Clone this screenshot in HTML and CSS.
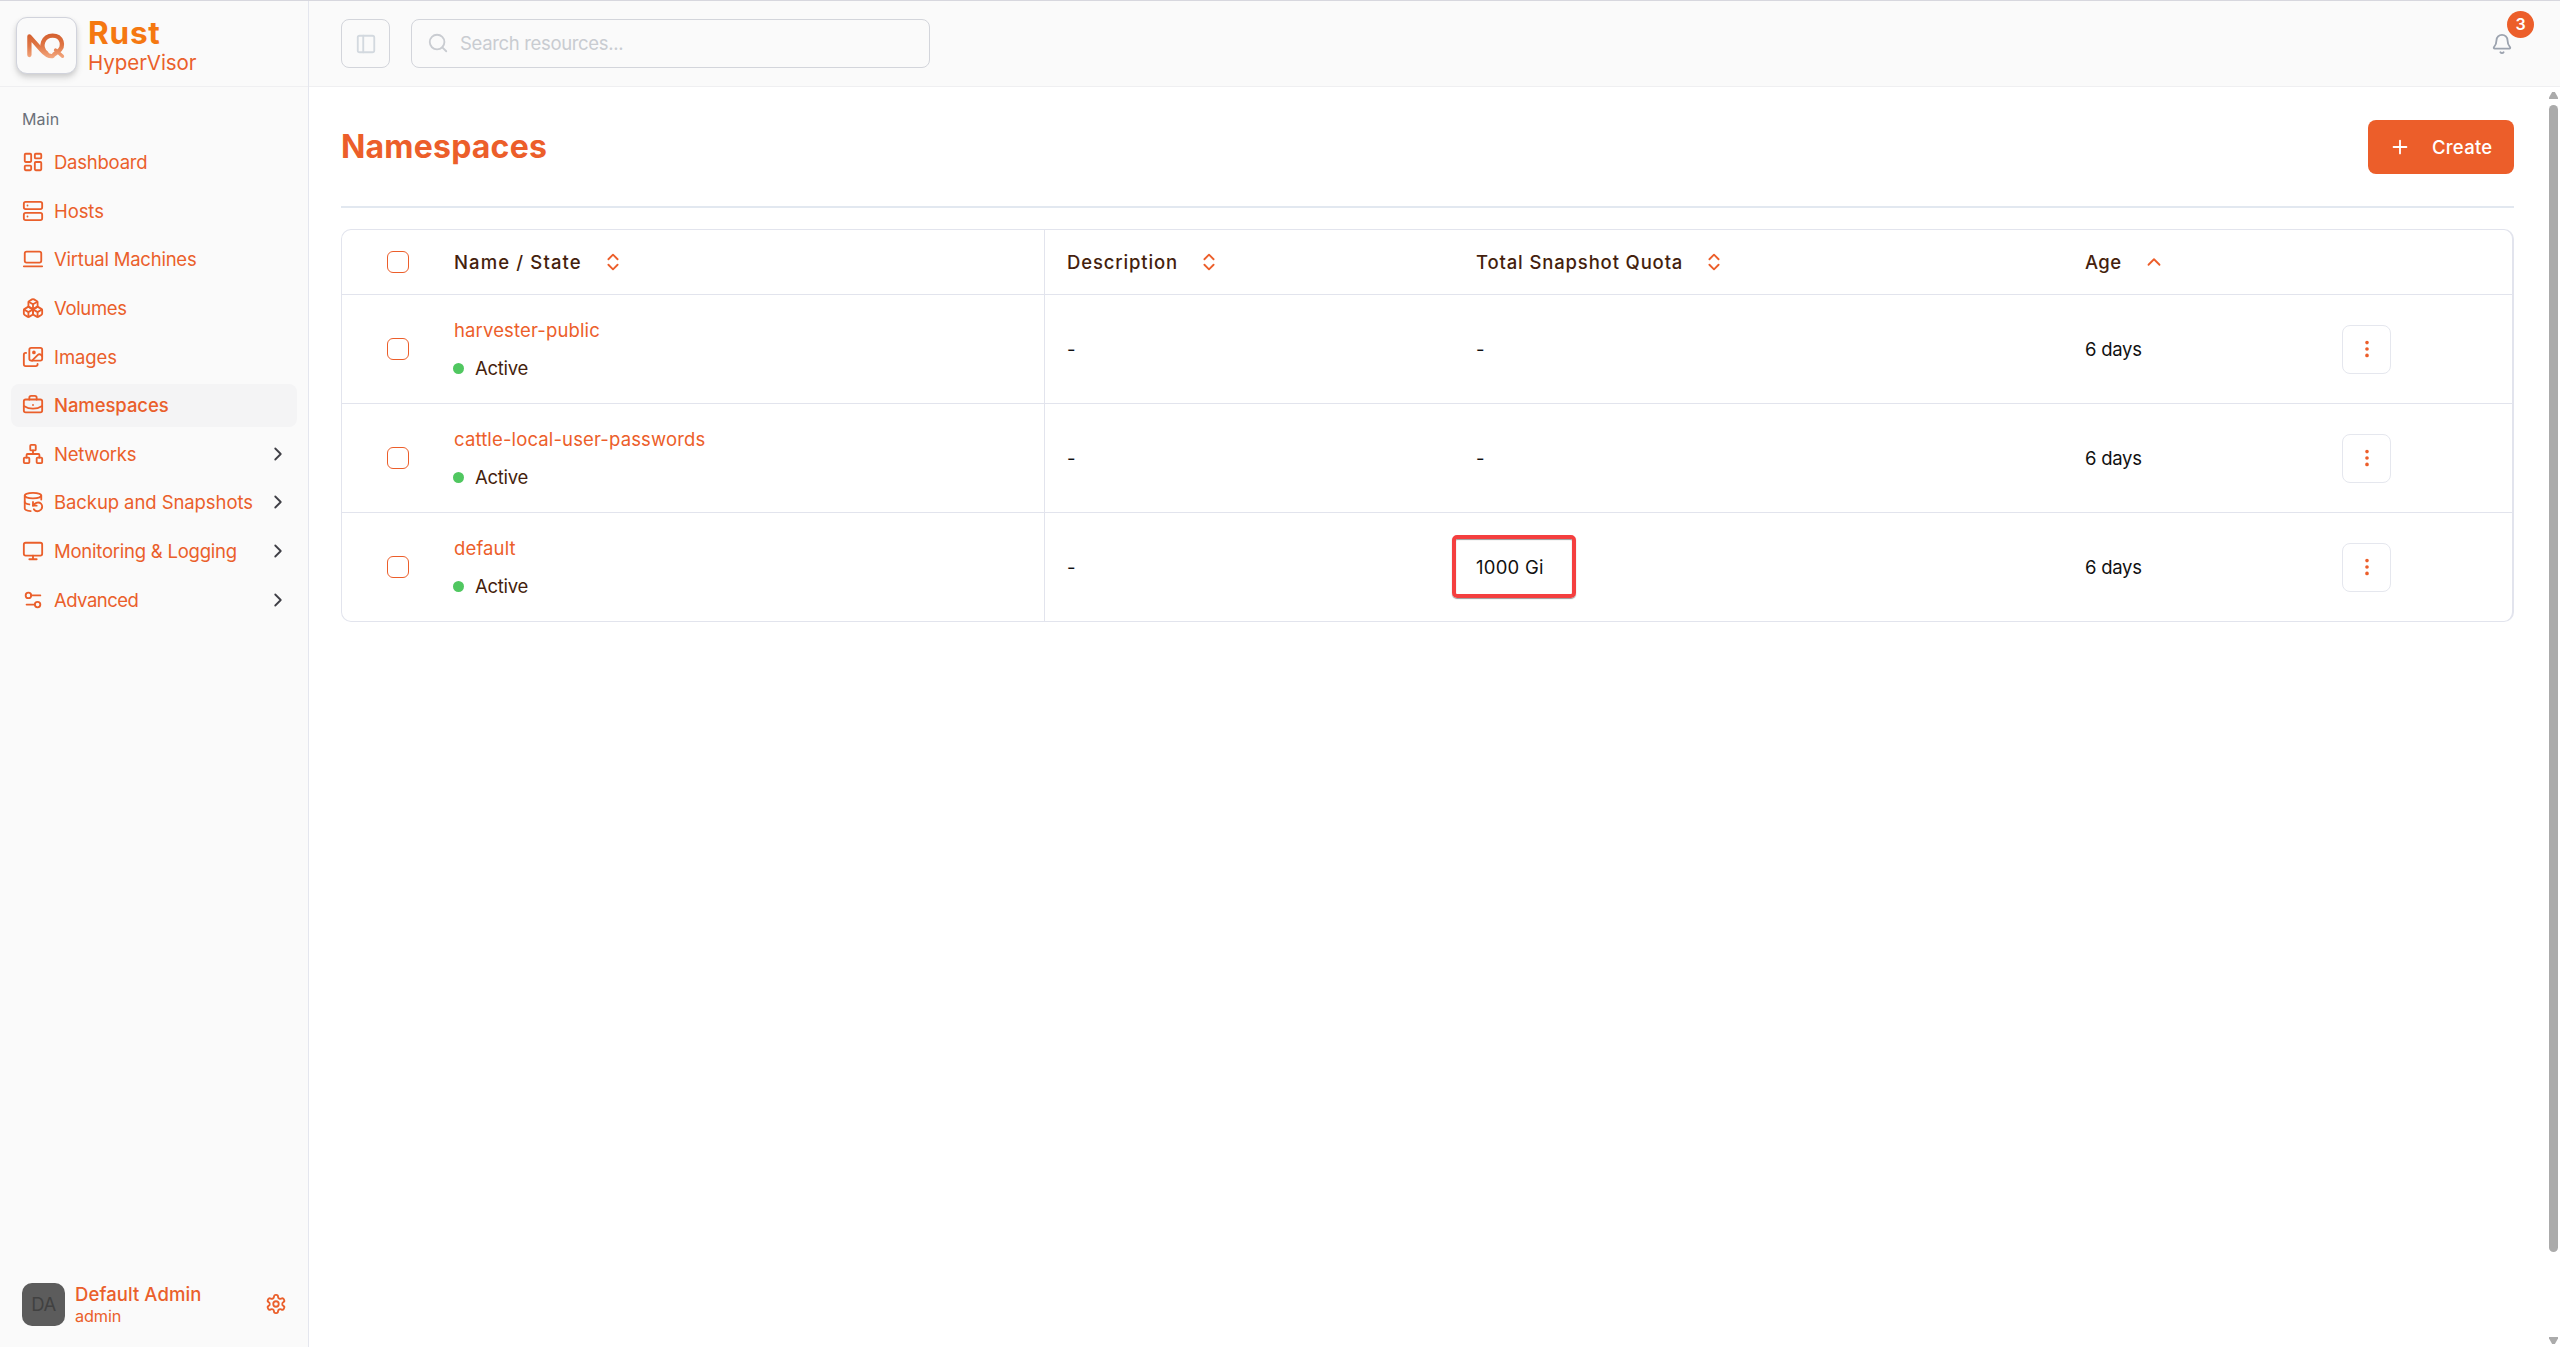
FILE: index.html
```html
<!DOCTYPE html>
<html lang="en">
<head>
<meta charset="utf-8">
<title>Namespaces - Rust HyperVisor</title>
<link rel="stylesheet" href="styles.css">
</head>
<body>
<svg class="defs" width="0" height="0">
  <symbol id="sort" viewBox="0 0 24 24"><path d="m7 15 5 5 5-5M7 9l5-5 5 5"/></symbol>
  <symbol id="chev" viewBox="0 0 24 24"><path d="m9 18 6-6-6-6"/></symbol>
  <symbol id="dots" viewBox="0 0 24 24"><circle cx="12" cy="12" r="1"/><circle cx="12" cy="5" r="1"/><circle cx="12" cy="19" r="1"/></symbol>
</svg>
<div class="app">
  <aside class="sidebar">
    <div class="brand">
      <div class="logo">
        <svg width="40" height="28" viewBox="0 0 40 28">
          <defs><linearGradient id="nq" gradientUnits="userSpaceOnUse" x1="0" y1="2" x2="0" y2="26"><stop offset="0" stop-color="#d4602f"/><stop offset=".5" stop-color="#e07746"/><stop offset="1" stop-color="#f3a880"/></linearGradient></defs>
          <path d="M3.400 23V4.400L15 17.500c4 4.600 7 7.200 11.500 6.600"/>
          <path d="M20.500 21.300C12.500 15 17.500 3.600 26.600 3.600c9.300 0 12.600 10.500 5.400 16L28 22.500"/>
          <path class="tail" d="m29.500 18 7 6.300"/>
        </svg>
      </div>
      <div class="brand-text"><div class="brand-name">Rust</div><div class="brand-sub">HyperVisor</div></div>
    </div>
    <nav class="nav">
      <div class="nav-label">Main</div>
      <a class="item snug"><svg class="icon" viewBox="0 0 24 24"><rect width="7" height="9" x="3" y="3" rx="1"/><rect width="7" height="5" x="14" y="3" rx="1"/><rect width="7" height="9" x="14" y="12" rx="1"/><rect width="7" height="5" x="3" y="16" rx="1"/></svg><span>Dashboard</span></a>
      <a class="item"><svg class="icon" viewBox="0 0 24 24"><rect width="20" height="8" x="2" y="2" rx="2"/><rect width="20" height="8" x="2" y="14" rx="2"/><path d="M6 6h.01M6 18h.01"/></svg><span>Hosts</span></a>
      <a class="item snug"><svg class="icon" viewBox="0 0 24 24"><rect width="18" height="12" x="3" y="4" rx="2"/><path d="M2 20h20"/></svg><span>Virtual Machines</span></a>
      <a class="item tight"><svg class="icon" viewBox="0 0 24 24"><path d="M2.970 12.920A2 2 0 0 0 2 14.630v3.240a2 2 0 0 0 .97 1.710l3 1.800a2 2 0 0 0 2.060 0L12 19v-5.500l-5-3-4.030 2.420Z"/><path d="m7 16.500-4.740-2.850M7 16.500l5-3M7 16.500v5.170"/><path d="M12 13.500V19l3.970 2.380a2 2 0 0 0 2.060 0l3-1.800a2 2 0 0 0 .97-1.710v-3.240a2 2 0 0 0-.97-1.710L17 10.500l-5 3Z"/><path d="m17 16.500-5-3M17 16.500l4.740-2.850M17 16.500v5.170"/><path d="M7.970 4.420A2 2 0 0 0 7 6.130v4.370l5 3 5-3V6.130a2 2 0 0 0-.97-1.710l-3-1.800a2 2 0 0 0-2.060 0l-3 1.800Z"/><path d="M12 8 7.260 5.150M12 8l4.740-2.850M12 13.500V8"/></svg><span>Volumes</span></a>
      <a class="item"><svg class="icon" viewBox="0 0 24 24"><path d="M4.500 7.500H4a2 2 0 0 0-2 2V20a2 2 0 0 0 2 2h11a2 2 0 0 0 2-2v-.5"/><path d="m22 11-1.296-1.296a2.400 2.400 0 0 0-3.408 0L11 16"/><circle cx="13" cy="7" r="1"/><rect x="8" y="2" width="14" height="14" rx="2"/></svg><span>Images</span></a>
      <a class="item active"><svg class="icon" viewBox="0 0 24 24"><path d="M12 12h.01"/><path d="M16 6V4a2 2 0 0 0-2-2h-4a2 2 0 0 0-2 2v2"/><path d="M22 13a18.150 18.150 0 0 1-20 0"/><rect width="20" height="14" x="2" y="6" rx="2"/></svg><span>Namespaces</span></a>
      <a class="item snug"><svg class="icon" viewBox="0 0 24 24"><rect x="16" y="16" width="6" height="6" rx="1"/><rect x="2" y="16" width="6" height="6" rx="1"/><rect x="9" y="2" width="6" height="6" rx="1"/><path d="M5 16v-3a1 1 0 0 1 1-1h12a1 1 0 0 1 1 1v3M12 12V8"/></svg><span>Networks</span><svg class="chev"><use href="#chev"/></svg></a>
      <a class="item"><svg class="icon" viewBox="0 0 24 24"><ellipse cx="12" cy="5" rx="9" ry="3"/><path d="M3 12a9 3 0 0 0 5 2.690M21 9.300V5"/><path d="M3 5v14a9 3 0 0 0 6.470 2.880M12 12v4h4"/><path d="M13 20a5 5 0 0 0 9-3 4.500 4.500 0 0 0-4.500-4.500c-1.330 0-2.540.54-3.410 1.410L12 16"/></svg><span>Backup and Snapshots</span><svg class="chev"><use href="#chev"/></svg></a>
      <a class="item snug"><svg class="icon" viewBox="0 0 24 24"><rect width="20" height="14" x="2" y="3" rx="2"/><path d="M8 21h8M12 17v4"/></svg><span>Monitoring &amp; Logging</span><svg class="chev"><use href="#chev"/></svg></a>
      <a class="item tighter"><svg class="icon" viewBox="0 0 24 24"><path d="M20 7h-10M14 17H5"/><circle cx="17" cy="17" r="3"/><circle cx="7" cy="7" r="3"/></svg><span>Advanced</span><svg class="chev"><use href="#chev"/></svg></a>
    </nav>
    <div class="user">
      <div class="avatar">DA</div>
      <div class="user-text"><div class="user-name">Default Admin</div><div class="user-role">admin</div></div>
      <svg class="gear" viewBox="0 0 24 24"><path d="M12.220 2h-.44a2 2 0 0 0-2 2v.18a2 2 0 0 1-1 1.730l-.43.25a2 2 0 0 1-2 0l-.15-.08a2 2 0 0 0-2.730.73l-.22.38a2 2 0 0 0 .73 2.730l.15.1a2 2 0 0 1 1 1.720v.51a2 2 0 0 1-1 1.740l-.15.09a2 2 0 0 0-.73 2.730l.22.38a2 2 0 0 0 2.730.73l.15-.08a2 2 0 0 1 2 0l.43.25a2 2 0 0 1 1 1.730V20a2 2 0 0 0 2 2h.44a2 2 0 0 0 2-2v-.18a2 2 0 0 1 1-1.730l.43-.25a2 2 0 0 1 2 0l.15.08a2 2 0 0 0 2.730-.73l.22-.39a2 2 0 0 0-.73-2.730l-.15-.08a2 2 0 0 1-1-1.740v-.5a2 2 0 0 1 1-1.740l.15-.09a2 2 0 0 0 .73-2.730l-.22-.38a2 2 0 0 0-2.730-.73l-.15.08a2 2 0 0 1-2 0l-.43-.25a2 2 0 0 1-1-1.730V4a2 2 0 0 0-2-2z"/><circle cx="12" cy="12" r="3"/></svg>
    </div>
  </aside>
  <div class="content">
    <header class="topbar">
      <div class="toggle"><svg viewBox="0 0 24 24"><rect width="18" height="18" x="3" y="3" rx="2"/><path d="M9 3v18"/></svg></div>
      <div class="search"><svg viewBox="0 0 24 24"><circle cx="11" cy="11" r="8"/><path d="m21 21-4.300-4.300"/></svg><span>Search resources...</span></div>
      <div class="bell"><svg viewBox="0 0 24 24"><path d="M10.268 21a2 2 0 0 0 3.464 0"/><path d="M3.262 15.326A1 1 0 0 0 4 17h16a1 1 0 0 0 .74-1.673C19.410 13.956 18 12.499 18 8A6 6 0 0 0 6 8c0 4.499-1.411 5.956-2.738 7.326"/></svg><span class="badge">3</span></div>
    </header>
    <div class="body">
      <main class="main">
        <div class="page-head"><h1>Namespaces</h1><button class="create"><svg viewBox="0 0 24 24"><path d="M5 12h14M12 5v14"/></svg>Create</button></div>
        <div class="table">
          <div class="row head">
            <div class="cell check"><i class="box"></i></div>
            <div class="cell name th wide">Name / State<svg class="sort"><use href="#sort"/></svg></div>
            <div class="cell th">Description<svg class="sort"><use href="#sort"/></svg></div>
            <div class="cell th">Total Snapshot Quota<svg class="sort"><use href="#sort"/></svg></div>
            <div class="cell th age">Age<svg class="up" viewBox="0 0 24 24"><path d="m18 15-6-6-6 6"/></svg></div>
            <div class="cell"></div>
          </div>
          <div class="row">
            <div class="cell check"><i class="box"></i></div>
            <div class="cell name"><div><div class="link">harvester-public</div><div class="state"><i class="dot"></i>Active</div></div></div>
            <div class="cell">-</div><div class="cell">-</div><div class="cell days">6 days</div>
            <div class="cell"><div class="more"><svg><use href="#dots"/></svg></div></div>
          </div>
          <div class="row">
            <div class="cell check"><i class="box"></i></div>
            <div class="cell name"><div><div class="link">cattle-local-user-passwords</div><div class="state"><i class="dot"></i>Active</div></div></div>
            <div class="cell">-</div><div class="cell">-</div><div class="cell days">6 days</div>
            <div class="cell"><div class="more"><svg><use href="#dots"/></svg></div></div>
          </div>
          <div class="row">
            <div class="cell check"><i class="box"></i></div>
            <div class="cell name"><div><div class="link">default</div><div class="state"><i class="dot"></i>Active</div></div></div>
            <div class="cell">-</div><div class="cell quota">1000 Gi<i class="highlight"></i></div><div class="cell days">6 days</div>
            <div class="cell"><div class="more"><svg><use href="#dots"/></svg></div></div>
          </div>
        </div>
      </main>
      <div class="scrollbar"><i class="arrow-up"></i><i class="thumb"></i><i class="arrow-down"></i></div>
    </div>
  </div>
</div>
</body>
</html>
```
FILE: styles.css
```css
* { box-sizing: border-box; }
body { margin: 0; font: 400 18.5px/24px Inter, sans-serif; color: #111; background: #fff; overflow: hidden; }
svg { width: 22px; height: 22px; fill: none; stroke: currentColor; stroke-width: 2; stroke-linecap: round; stroke-linejoin: round; flex: none; }
.defs { position: absolute; width: 0; height: 0; }
.app { display: flex; height: 1347px; border-top: 1px solid #d7d7de; }

.sidebar { width: 309px; flex: none; display: flex; flex-direction: column; background: #fafafa; border-right: 1px solid #e4e6ee; color: #ea5f2b; }
.brand { height: 86px; flex: none; display: flex; align-items: flex-start; padding: 16px 0 0 16px; gap: 11px; border-bottom: 1px solid #efeff1; }
.logo { width: 61px; height: 57px; display: grid; place-items: center; border: 1px solid #d1d3dc; border-radius: 11px; background: #fafafa; box-shadow: 0 4px 7px rgba(0,0,0,.12), 0 2px 4px rgba(0,0,0,.08); }
.logo svg { width: 40px; height: 28px; margin-right: 1px; stroke: url(#nq); stroke-width: 4.3; }
.logo .tail { stroke-width: 3.3; }
.brand-name { font-size: 31.5px; font-weight: 700; line-height: 34px; letter-spacing: .8px; color: #f57811; margin-top: -1px; }
.brand-sub { font-size: 20.5px; line-height: 26px; letter-spacing: -.05px; }

.nav { flex: 1; padding: 16px 11px; }
.nav-label { height: 32px; line-height: 33px; padding-left: 11px; font-size: 16px; letter-spacing: .15px; color: #6b7079; }
.item { height: 43px; margin-bottom: 5.640px; padding: 0 8px 0 11px; display: flex; align-items: center; gap: 10px; border-radius: 8px; letter-spacing: -.08px; white-space: nowrap; }
.nav-label + .item { margin-top: 5.500px; }
.item.snug { letter-spacing: -.23px; }
.item.tight { letter-spacing: -.35px; }
.item.tighter { letter-spacing: -.53px; }
.item.active { background: #f4f4f5; font-weight: 500; }
.chev { color: #3f3f46; margin-left: auto; }

.user { display: flex; align-items: center; height: 86px; padding: 0 21px 0 22px; }
.avatar { width: 43px; height: 43px; border-radius: 10px; background: #5c5c5c; color: #414141; display: grid; place-items: center; letter-spacing: -.5px; }
.user-text { margin-left: 10px; }
.user-name { font-weight: 500; letter-spacing: .08px; line-height: 24px; }
.user-role { font-size: 16.300px; letter-spacing: -.15px; line-height: 21px; }
.gear { margin-left: auto; }

.content { flex: 1; display: flex; flex-direction: column; min-width: 0; }
.topbar { height: 86px; flex: none; display: flex; align-items: center; padding: 0 47px 0 32px; gap: 21px; background: #fafafa; border-bottom: 1px solid #efeff1; }
.toggle { width: 49px; height: 49px; display: grid; place-items: center; border: 1px solid #d3d5db; border-radius: 8px; color: #d3d9df; }
.search { width: 519px; height: 49px; display: flex; align-items: center; gap: 11px; padding: 0 0 1px 15px; border: 1px solid #d3d5db; border-radius: 8px; color: #c9ccd1; letter-spacing: -.34px; }
.bell { margin-left: auto; position: relative; width: 22px; height: 22px; color: #9ca3af; }
.bell svg { display: block; }
.badge { position: absolute; left: 16px; top: -22px; width: 27px; height: 27px; border-radius: 50%; background: #ec5e2a; color: #fff; font-size: 16px; font-weight: 600; line-height: 27px; text-align: center; }

.body { flex: 1; display: flex; }
.main { flex: 1; padding: 33px 35px 0 32px; }
.page-head { display: flex; justify-content: space-between; align-items: flex-start; height: 88px; border-bottom: 2px solid #e2e8f0; }
h1 { margin: 0; font-size: 32px; line-height: 54px; font-weight: 700; letter-spacing: .2px; color: #ec5e2a; }
.create { width: 146px; height: 54px; display: flex; align-items: center; gap: 21px; border: 0; border-radius: 8px; padding: 0 0 1px 21px; background: #ec5e2a; color: #fff; font: 500 18.500px Inter, sans-serif; letter-spacing: .25px; }

.table { margin-top: 21px; border: 1px solid #e2e4ed; border-right-width: 2px; border-radius: 10px; }
.row { display: grid; grid-template-columns: 90px 613px 409px 609px 257px 1fr; height: 109px; border-bottom: 1px solid #e2e4ed; }
.row.head { height: 65px; }
.row:last-child { border-bottom: 0; height: 108px; }
.cell { display: flex; align-items: center; padding-left: 22px; }
.check { padding-left: 45px; }
.name { border-right: 1px solid #e2e4ed; }
.box { width: 22px; height: 22px; border: 1px solid #ec5e2a; border-radius: 6px; }
.th { font-weight: 500; letter-spacing: .85px; color: #451f0e; }
.th.wide { letter-spacing: 1.12px; }
.th.age { letter-spacing: .4px; }
.sort { margin-left: 20px; color: #ec5e2a; }
.up { margin-left: 21px; color: #ec5e2a; }
.link { color: #ec5e2a; letter-spacing: .14px; line-height: 24px; margin-bottom: 14px; }
.state { display: flex; align-items: center; gap: 11px; margin-left: -1px; color: #451f0e; letter-spacing: -.3px; }
.dot { width: 11px; height: 11px; border-radius: 50%; background: #50c760; }
.days { letter-spacing: -.25px; }
.quota { position: relative; letter-spacing: .25px; }
.highlight { position: absolute; left: -2px; top: 22px; width: 124px; height: 63px; border: 4px solid #f43f3f; border-radius: 5px; box-shadow: 0 1px 1px #999, inset 0 1px 1px #999; }
.more { width: 49px; height: 49px; display: grid; place-items: center; border: 1px solid #e5e7ee; border-radius: 8px; color: #ec5e2a; }

.scrollbar { width: 11px; display: flex; flex-direction: column; align-items: flex-start; padding: 5px 2px 3px 0; }
.arrow-up, .arrow-down { width: 9px; height: 7px; background: #ababab; clip-path: polygon(35% 0, 65% 0, 100% 80%, 100% 100%, 0 100%, 0 80%); }
.arrow-down { margin-top: auto; transform: scaleY(-1); }
.thumb { width: 9px; height: 1147px; margin-top: 6px; border-radius: 5px; background: #ababab; }
```
